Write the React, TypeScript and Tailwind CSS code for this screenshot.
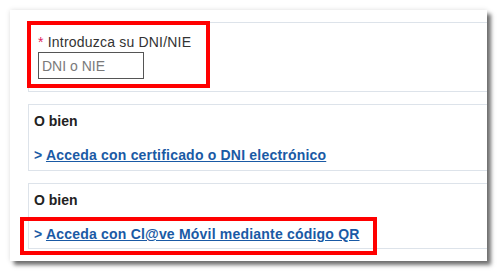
import React from 'react';

export default function App() {
  return (
    <div className="w-[498px] h-[277px] bg-white pt-[10px] pl-[10px] font-['Liberation_Sans',Arial,sans-serif]">
      <div className="relative w-[477px] h-[251px] bg-white overflow-hidden shadow-[4px_4px_4px_rgba(0,0,0,0.55),0_0_5px_rgba(0,0,0,0.12)]">
        <div className="flex flex-col gap-[12px] pt-[12px] pl-[18px]">
          {/* DNI field */}
          <div className="w-[480px] h-[70px] border border-[#dde3ea] pt-[11px] pl-[9px]">
            <label className="block text-[14px] leading-[16px] tracking-[0.2px] text-[#333]">
              <span className="text-[#e0245e]">*</span> Introduzca su DNI/NIE
            </label>
            <input
              type="text"
              placeholder="DNI o NIE"
              className="mt-[2px] w-[106px] h-[27px] border border-[#555] px-[3px] text-[14px] text-[#333] placeholder:text-[#7a7a7a] outline-none"
            />
          </div>

          {/* Certificado */}
          <div className="w-[480px] h-[67px] border border-[#dde3ea] pt-[8px] pl-[5px]">
            <div className="text-[14px] leading-[16px] font-bold text-[#222]">O bien</div>
            <div className="mt-[18px] text-[14px] leading-[16px] tracking-[0.2px] font-bold text-[#1a5aa5]">
              &gt; <a href="#" className="underline">Acceda con certificado o DNI electrónico</a>
            </div>
          </div>

          {/* Cl@ve */}
          <div className="w-[480px] h-[66px] border border-[#dde3ea] pt-[8px] pl-[5px]">
            <div className="text-[14px] leading-[16px] font-bold text-[#222]">O bien</div>
            <div className="mt-[18px] text-[14px] leading-[16px] tracking-[0.2px] font-bold text-[#1a5aa5]">
              &gt; <a href="#" className="underline">Acceda con Cl@ve Móvil mediante código QR</a>
            </div>
          </div>
        </div>

        {/* annotation boxes */}
        <div className="absolute left-[17px] top-[11px] w-[183px] h-[67px] border-4 border-[#ff0000]" />
        <div className="absolute left-[10px] top-[207px] w-[357px] h-[38px] border-4 border-[#ff0000]" />
      </div>
    </div>
  );
}
